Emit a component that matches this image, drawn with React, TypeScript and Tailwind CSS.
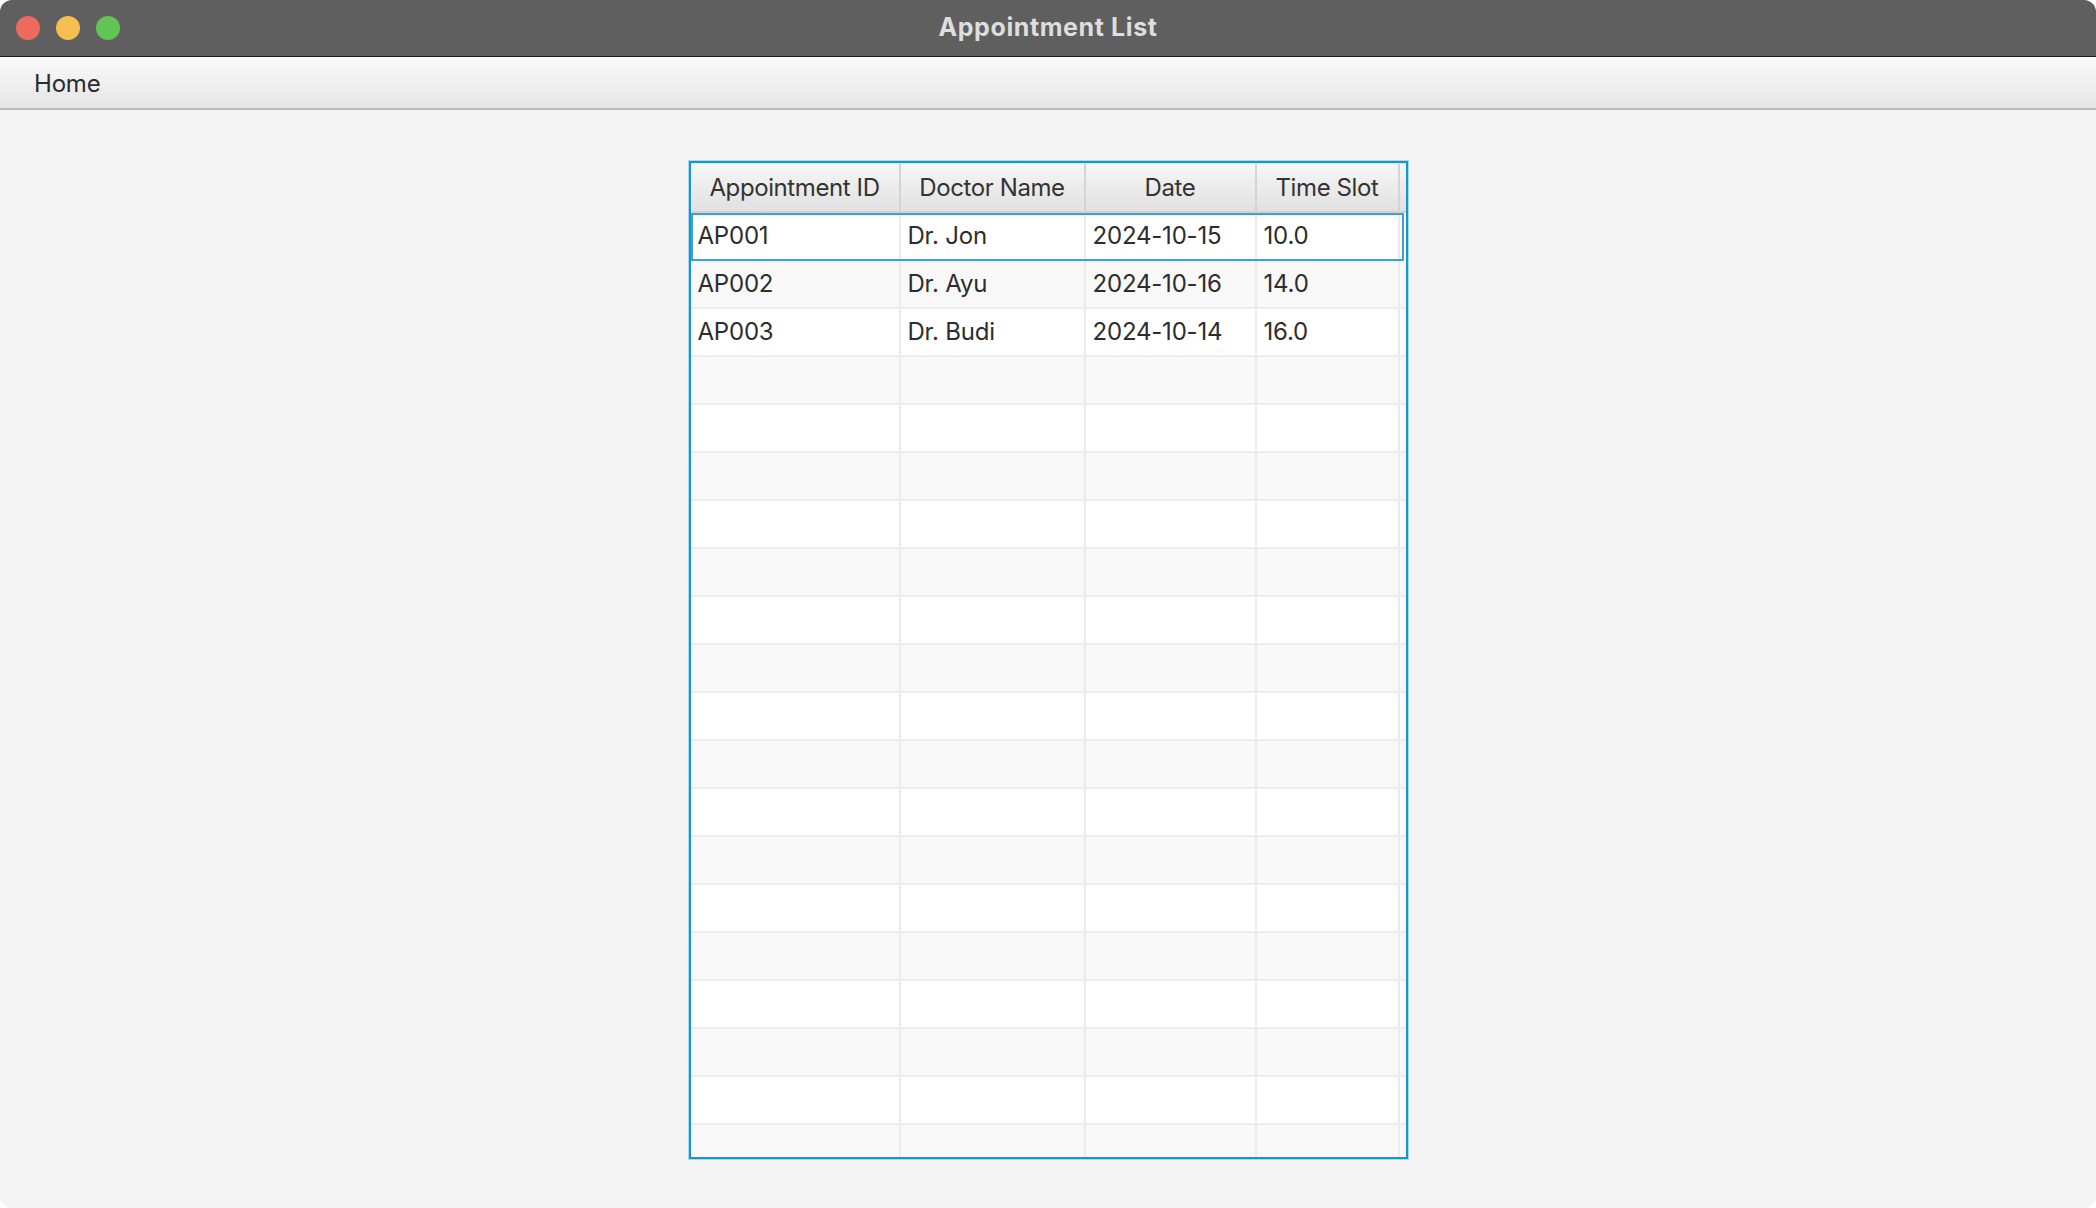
import React from 'react';

const rows = [
  { id: 'AP001', doctor: 'Dr. Jon', date: '2024-10-15', slot: '10.0' },
  { id: 'AP002', doctor: 'Dr. Ayu', date: '2024-10-16', slot: '14.0' },
  { id: 'AP003', doctor: 'Dr. Budi', date: '2024-10-14', slot: '16.0' },
];

const headers = ['Appointment ID', 'Doctor Name', 'Date', 'Time Slot'];

const TOTAL_ROWS = 20;

const App: React.FC = () => {
  const allRows = Array.from({ length: TOTAL_ROWS }, (_, i) => rows[i] || null);

  return (
    <div
      className="w-[2096px] h-[1208px] bg-white"
      style={{ fontFamily: 'Inter, "Noto Sans", sans-serif' }}
    >
      <div className="h-full rounded-[12px] overflow-hidden flex flex-col bg-[#f4f4f4]">
        {/* Title bar */}
        <div className="relative h-[57px] shrink-0 bg-[#5f5f5f] border-b border-[#1e1e1e] flex items-center justify-center">
          <div className="absolute left-[16px] top-[16px] flex gap-[16px]">
            <span className="w-[24px] h-[24px] rounded-full bg-[#ed6a5e]" />
            <span className="w-[24px] h-[24px] rounded-full bg-[#f5bf4f]" />
            <span className="w-[24px] h-[24px] rounded-full bg-[#61c554]" />
          </div>
          <span className="text-[25px] font-bold text-[#dedede] tracking-[0.6px]">Appointment List</span>
        </div>

        {/* Menu bar */}
        <div className="h-[53px] shrink-0 bg-gradient-to-b from-[#fafafa] to-[#e5e5e5] border-b-2 border-[#b9b9b9] flex items-center pl-[34px] pt-[2px]">
          <span className="text-[24px] text-[#2b2b2b] tracking-[-0.2px]">Home</span>
        </div>

        {/* Content */}
        <div className="flex-1 pt-[51px]">
          <div className="mx-auto w-[719px] h-[998px] border-2 border-[#1596cf] shadow-[0_0_0_1px_#a9d9ef] bg-white overflow-hidden">
            {/* Header */}
            <div className="grid grid-cols-[210px_185px_171px_143px_6px] h-[50px] bg-gradient-to-b from-[#f6f6f6] to-[#e1e1e1] border-b-2 border-[#d2d2d2] border-t border-t-[#e0f0f8]">
              {headers.map((h) => (
                <div
                  key={h}
                  className="flex items-center justify-center border-r-2 border-[#d4d4d4] text-[24px] text-[#333333] tracking-[-0.4px] pt-[1px]"
                >
                  {h}
                </div>
              ))}
              <div />
            </div>

            {/* Rows */}
            {allRows.map((r, i) => (
              <div
                key={i}
                className={`grid grid-cols-[210px_185px_171px_143px_6px] h-[48px] border-b-2 border-[#ececec] ${
                  i % 2 === 0 ? 'bg-white' : 'bg-[#f8f8f8]'
                } ${i === 0 ? 'outline-2 -outline-offset-2 outline-[#3aa2d4] mr-[2px]' : ''}`}
              >
                {[r?.id, r?.doctor, r?.date, r?.slot].map((v, j) => (
                  <div
                    key={j}
                    className="flex items-center pl-[7px] border-r-2 border-[#ebebeb] text-[24px] text-[#2d2d2d] tracking-[-0.2px]"
                  >
                    {v || ''}
                  </div>
                ))}
                <div />
              </div>
            ))}
          </div>
        </div>
      </div>
    </div>
  );
};

export default App;
